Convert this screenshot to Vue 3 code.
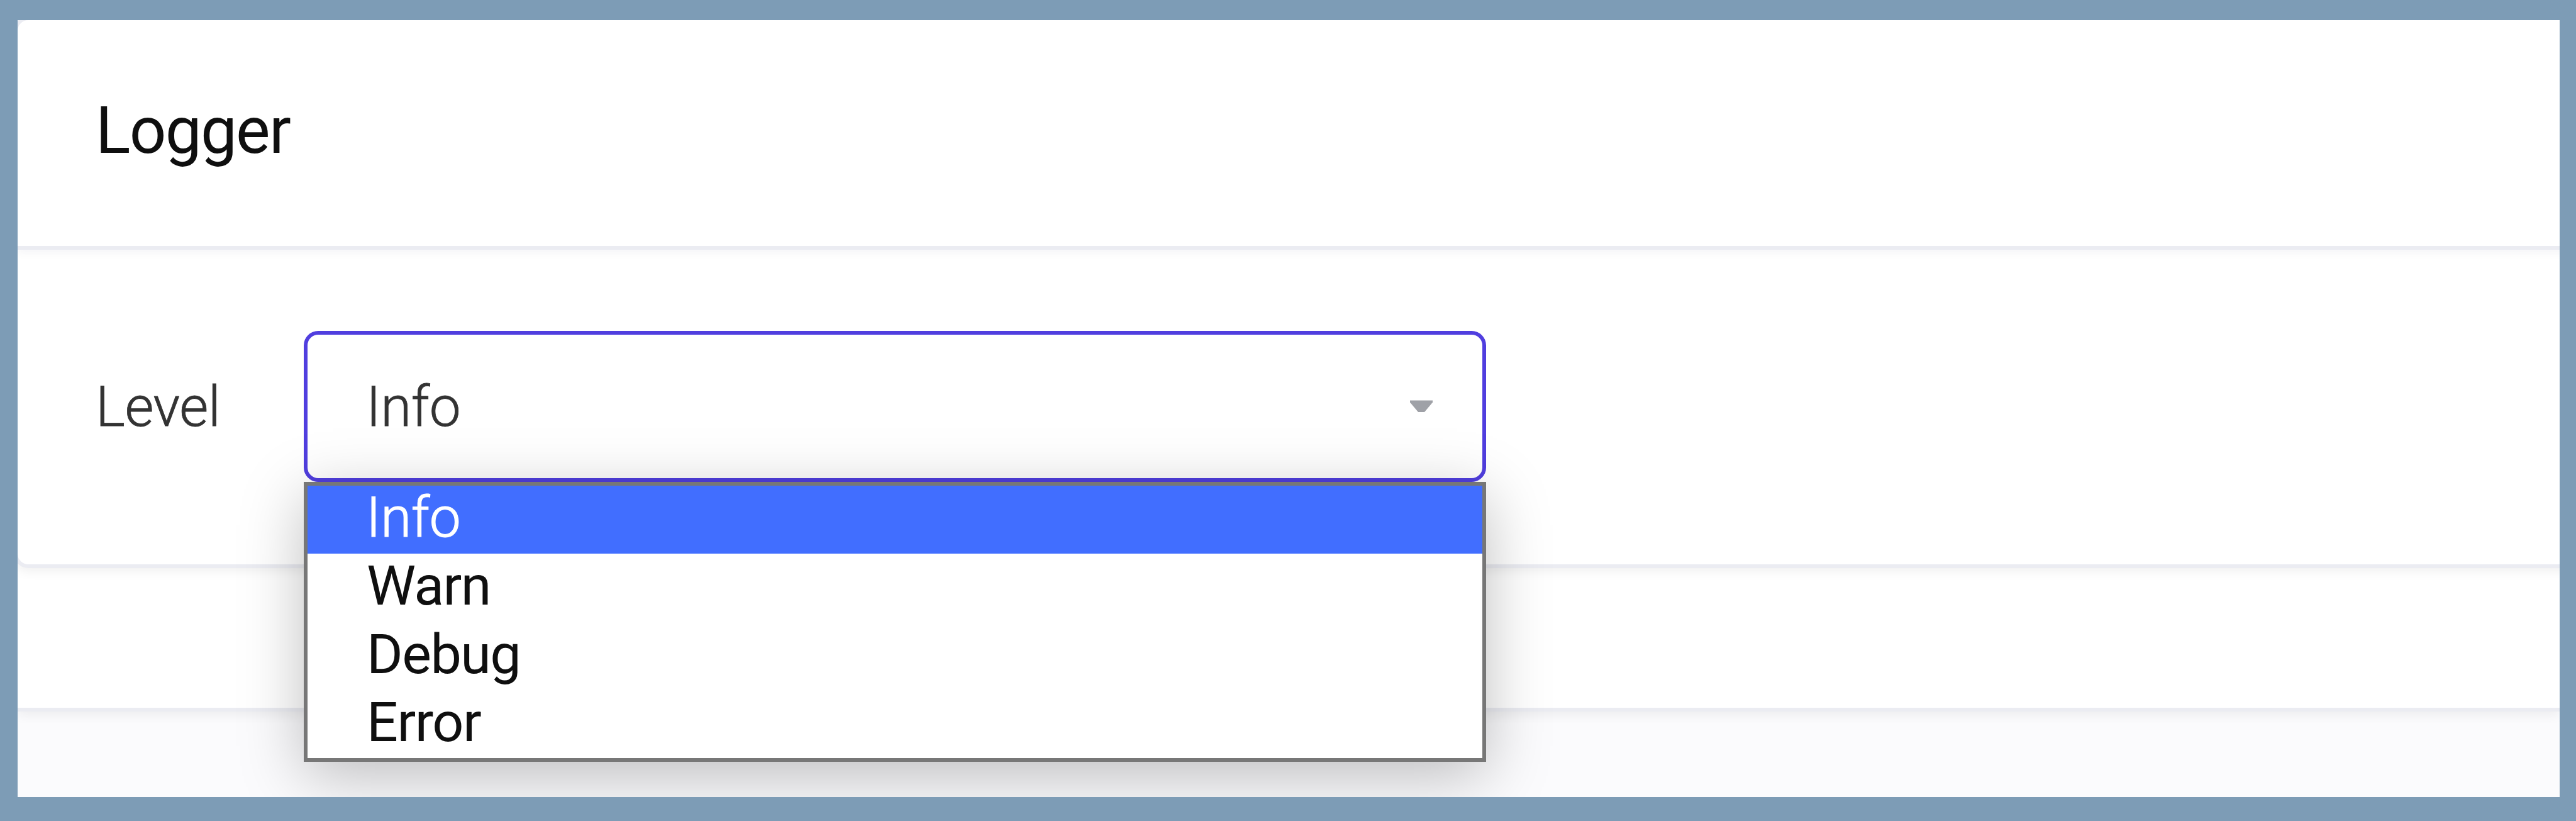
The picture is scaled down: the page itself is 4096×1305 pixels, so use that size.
<script setup>
import { ref } from 'vue'

const levels = ['Info', 'Warn', 'Debug', 'Error']
const level = ref('Info')
</script>

<template>
  <div class="frame">
    <div class="page">
      <div class="panel">
        <section class="card">
          <header class="card-header">
            <h3 class="title">Logger</h3>
          </header>
          <div class="card-body">
            <label class="label">Level</label>
            <div class="select">
              <span class="value">{{ level }}</span>
              <svg class="caret" viewBox="0 0 36 20">
                <path d="M0 0.5h36v3l-13 15.5h-10L0 3.5z" />
              </svg>
              <ul class="menu">
                <li
                  v-for="item in levels"
                  :key="item"
                  class="option"
                  :class="{ active: item === level }"
                  @click="level = item"
                >{{ item }}</li>
              </ul>
            </div>
          </div>
        </section>
      </div>
    </div>
  </div>
</template>

<style>
body {
    margin: 0;
}
</style>

<style scoped>
.frame {
    box-sizing: border-box;
    width: 4096px;
    height: 1305px;
    padding: 32px 26px 38px 28px;
    background: #7d9cb6;
    font-family: Roboto, "Liberation Sans", sans-serif;
}

.page {
    height: 1235px;
    overflow: hidden;
    background: #fbfbfd;
}

.panel {
    box-sizing: border-box;
    height: 1099px;
    border-bottom: 6px solid #ebecf2;
    background: #fff;
    box-shadow: 0 6px 17px rgba(10, 10, 10, 0.06);
}

.card {
    box-sizing: border-box;
    height: 877px;
    margin: 0 -40px 0 -6px;
    border: 6px solid #ebecf2;
    border-radius: 23px;
    background: #fff;
    box-shadow: 0 6px 17px rgba(10, 10, 10, 0.06);
    /* the top border is cut off by the page edge */
    transform: translateY(-6px);
}

.card-header {
    display: flex;
    align-items: center;
    box-sizing: border-box;
    height: 365px;
    padding: 0 0 7px 124px;
    border-bottom: 6px solid #ebecf2;
    box-shadow: 0 6px 12px rgba(20, 20, 80, 0.04);
}

.title {
    margin: 0;
    font-size: 103px;
    font-weight: 400;
    letter-spacing: -1.7px;
    line-height: 120px;
    color: #0f0f0f;
}

.card-body {
    display: flex;
    align-items: center;
    height: 240px;
    padding: 129px 0 0 124px;
}

.label {
    width: 331px;
    font-size: 89px;
    font-weight: 300;
    letter-spacing: -0.5px;
    color: #333;
    -webkit-text-stroke: 0.8px #333;
}

.select {
    position: relative;
    display: flex;
    align-items: center;
    justify-content: space-between;
    box-sizing: border-box;
    width: 1880px;
    height: 240px;
    padding: 0 79px 0 93px;
    border: 6px solid #503edf;
    border-radius: 23px;
    font-size: 89px;
    font-weight: 300;
    letter-spacing: -0.5px;
    color: #333;
}

.value {
    -webkit-text-stroke: 0.8px #333;
}

.caret {
    width: 36px;
    height: 20px;
    fill: #9fa1a7;
}

.menu {
    position: absolute;
    top: 234px;
    left: -6px;
    box-sizing: border-box;
    width: 1880px;
    margin: 0;
    padding: 0;
    border: 6px solid #777;
    background: #fff;
    box-shadow: 0 22px 94px rgba(0, 0, 0, 0.25);
    list-style: none;
    font-size: 88px;
    font-weight: 400;
    letter-spacing: -1.5px;
    color: #0f0f0f;
}

.option {
    box-sizing: border-box;
    height: 108.25px;
    padding-left: 94px;
    line-height: 101px;
}

.option.active {
    padding-left: 93px;
    background: #416eff;
    color: #fff;
    font-size: 89px;
    font-weight: 300;
    letter-spacing: -0.5px;
    -webkit-text-stroke: 1.2px #fff;
}
</style>
